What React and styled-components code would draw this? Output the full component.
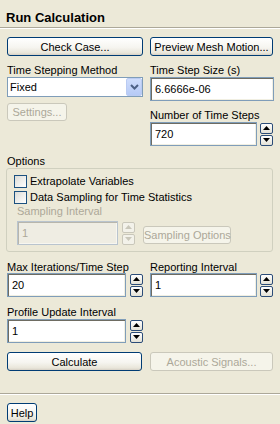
import React from 'react';
import styled, { createGlobalStyle } from 'styled-components';

const Global = createGlobalStyle`
  html, body { margin: 0; padding: 0; background: #ECE9D8; }
  body { font-family: "Liberation Sans", Arial, sans-serif; font-size: 11px; color: #000; }
  * { box-sizing: border-box; }
`;

const Panel = styled.div`
  width: 280px;
  height: 424px;
  display: flex;
  flex-direction: column;
  background: #ECE9D8;
  overflow: hidden;
`;

const Title = styled.div`
  height: 27px;
  padding: 10px 0 0 6px;
  font-weight: bold;
  font-size: 13px;
  line-height: 16px;
`;

const Separator = styled.div`
  height: 2px;
  flex: none;
  border-top: 1px solid #ACA899;
  border-bottom: 1px solid #FFFFFF;
`;

const Body = styled.div`
  flex: 1;
  padding: 8px 6px 0 7px;
`;

const Columns = styled.div`
  display: grid;
  grid-template-columns: 136px 124px;
  column-gap: 7px;
  align-items: start;
  margin-top: ${p => p.$mt || 0}px;
`;

const Stack = styled.div`
  display: flex;
  flex-direction: column;
`;

const Label = styled.div`
  height: ${p => p.$h || 13}px;
  flex: none;
  line-height: 13px;
  white-space: nowrap;
  color: ${p => (p.$disabled ? '#ACA899' : '#000')};
  margin-top: ${p => p.$mt || 0}px;
`;

const Button = styled.button`
  height: ${p => p.$h || 19}px;
  width: ${p => (p.$w ? `${p.$w}px` : '100%')};
  flex: none;
  margin-top: ${p => p.$mt || 0}px;
  padding: 0;
  font: 11px "Liberation Sans", Arial, sans-serif;
  color: #000;
  border: 1px solid #003C74;
  border-radius: 3px;
  background: linear-gradient(#FFFFFF 0%, #F6F5F0 55%, #E9E6DA 88%, #D6D0C5 100%);
  white-space: nowrap;
  &:disabled {
    border-color: #CAC8BB;
    color: #ACA899;
    background: #F5F4EA;
  }
`;

const TextBox = styled.input`
  display: block;
  height: 24px;
  width: 100%;
  min-width: 0;
  flex: none;
  padding: 0 0 0 4px;
  margin: 0;
  font: 11px "Liberation Sans", Arial, sans-serif;
  color: #000;
  background: #FFFFFF;
  border: 1px solid #7F9DB9;
  box-shadow: inset 1px 1px 0 #6E6C62, inset -1px -1px 0 #F1EFE2;
  outline: none;
  &:disabled {
    color: #ACA899;
    background: #EFEDE3;
    border-color: #B9C4CE;
    box-shadow: inset 1px 1px 0 #B8B6AC, inset -1px -1px 0 #F7F6F0;
  }
`;

const SpinField = styled.div`
  display: flex;
  align-items: center;
  gap: ${p => p.$gap || 4}px;
  width: ${p => (p.$w ? `${p.$w}px` : '100%')};
  flex: none;
  & > input {
    flex: 1 1 auto;
    width: auto;
  }
`;

const Spin = styled.div`
  display: flex;
  flex-direction: column;
  gap: 1px;
  width: 13px;
  flex: none;
`;

const SpinBtn = styled.div`
  height: 11px;
  border: 1px solid ${p => (p.$disabled ? '#C9C7BA' : '#2B4C78')};
  border-radius: 2px;
  background: ${p => (p.$disabled ? '#F3F2EA' : 'linear-gradient(#FFFFFF, #E3E1D6)')};
  display: flex;
  align-items: center;
  justify-content: center;
`;

const Combo = styled.div`
  height: 20px;
  flex: none;
  border: 1px solid #7F9DB9;
  background: #FFFFFF;
  display: flex;
  align-items: stretch;
`;

const ComboText = styled.span`
  flex: 1;
  padding-left: 2px;
  line-height: 18px;
`;

const ComboArrow = styled.div`
  width: 16px;
  border: 1px solid #BACBF2;
  border-radius: 2px;
  background: linear-gradient(#CFDDFC, #B6CAF6);
  display: flex;
  align-items: center;
  justify-content: center;
`;

const Group = styled.div`
  margin-left: -1px;
  width: 267px;
  border: 1px solid #D0D0BF;
  border-radius: 3px;
  padding: 6px 0 6px 7px;
`;

const CheckList = styled.div`
  display: flex;
  flex-direction: column;
  gap: 3px;
`;

const CheckRow = styled.label`
  display: flex;
  align-items: flex-start;
  gap: 3px;
  height: 13px;
  line-height: 13px;
  white-space: nowrap;
`;

const Box = styled.span`
  width: 13px;
  height: 13px;
  flex: none;
  border: 1px solid #1C5180;
  background: linear-gradient(135deg, #DCDCD7, #FFFFFF);
`;

const Sampling = styled.div`
  padding-left: 3px;
  margin-top: 1px;
`;

const SamplingRow = styled.div`
  display: flex;
  align-items: center;
  margin-top: 3px;
`;

const SideButton = styled(Button)`
  align-self: flex-end;
  margin-left: 8px;
  margin-bottom: 1px;
`;

const Footer = styled.div`
  padding: 8px 0 2px 7px;
`;

const Up = ({ c }) => (
  <svg width="7" height="4" viewBox="0 0 7 4"><polygon points="0,4 7,4 3.5,0" fill={c} /></svg>
);
const Down = ({ c }) => (
  <svg width="7" height="4" viewBox="0 0 7 4"><polygon points="0,0 7,0 3.5,4" fill={c} /></svg>
);

const Spinner = ({ disabled }) => {
  const c = disabled ? '#C9C7BA' : '#000';
  return (
    <Spin>
      <SpinBtn $disabled={disabled}><Up c={c} /></SpinBtn>
      <SpinBtn $disabled={disabled}><Down c={c} /></SpinBtn>
    </Spin>
  );
};

const Chevron = () => (
  <svg width="9" height="6" viewBox="0 0 9 6">
    <polyline points="1,1 4.5,4.5 8,1" fill="none" stroke="#4D6185" strokeWidth="2" />
  </svg>
);

export default function App() {
  return (
    <>
      <Global />
      <Panel>
        <Title>Run Calculation</Title>
        <Separator />
        <Body>
          <Columns>
            <Button>Check Case...</Button>
            <Button $w={123}>Preview Mesh Motion...</Button>
          </Columns>

          <Columns $mt={8}>
            <Stack>
              <Label>Time Stepping Method</Label>
              <Combo>
                <ComboText>Fixed</ComboText>
                <ComboArrow><Chevron /></ComboArrow>
              </Combo>
              <Button $w={60} $h={18} $mt={6} disabled>Settings...</Button>
            </Stack>
            <Stack>
              <Label>Time Step Size (s)</Label>
              <TextBox readOnly value="6.6666e-06" />
              <Label $mt={8}>Number of Time Steps</Label>
              <SpinField $w={123} $gap={3}>
                <TextBox readOnly value="720" />
                <Spinner />
              </SpinField>
            </Stack>
          </Columns>

          <Label $mt={9}>Options</Label>
          <Group>
            <CheckList>
              <CheckRow><Box />Extrapolate Variables</CheckRow>
              <CheckRow><Box />Data Sampling for Time Statistics</CheckRow>
            </CheckList>
            <Sampling>
              <Label $disabled>Sampling Interval</Label>
              <SamplingRow>
                <SpinField $w={118}>
                  <TextBox disabled value="1" readOnly />
                  <Spinner disabled />
                </SpinField>
                <SideButton $w={88} $h={18} disabled>Sampling Options</SideButton>
              </SamplingRow>
            </Sampling>
          </Group>

          <Columns $mt={9}>
            <Stack>
              <Label $h={12}>Max Iterations/Time Step</Label>
              <SpinField>
                <TextBox readOnly value="20" />
                <Spinner />
              </SpinField>
            </Stack>
            <Stack>
              <Label $h={12}>Reporting Interval</Label>
              <SpinField $w={123} $gap={3}>
                <TextBox readOnly value="1" />
                <Spinner />
              </SpinField>
            </Stack>
          </Columns>

          <Columns $mt={9}>
            <Stack>
              <Label>Profile Update Interval</Label>
              <SpinField>
                <TextBox readOnly value="1" />
                <Spinner />
              </SpinField>
            </Stack>
          </Columns>

          <Columns $mt={9}>
            <Button $w={135}>Calculate</Button>
            <Button $w={123} disabled>Acoustic Signals...</Button>
          </Columns>
        </Body>
        <Separator />
        <Footer>
          <Button $w={30}>Help</Button>
        </Footer>
      </Panel>
    </>
  );
}
